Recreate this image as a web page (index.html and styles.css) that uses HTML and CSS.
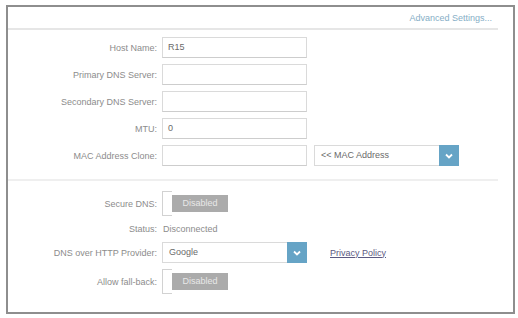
FILE: index.html
```html
<!DOCTYPE html>
<html lang="en">
<head>
  <meta charset="UTF-8" />
  <title>Internet Settings</title>
  <link rel="stylesheet" href="styles.css">
</head>
<body>

  <div class="panel">

    <!-- Header -->
    <div class="panel-head">
      <a class="adv-link" href="#">Advanced Settings...</a>
    </div>

    <!-- Basic fields -->
    <div class="form-grid top">
      <label class="lbl">Host Name:</label>
      <div class="field">R15</div>
      <span></span>

      <label class="lbl">Primary DNS Server:</label>
      <div class="field"></div>
      <span></span>

      <label class="lbl">Secondary DNS Server:</label>
      <div class="field"></div>
      <span></span>

      <label class="lbl">MTU:</label>
      <div class="field">0</div>
      <span></span>

      <label class="lbl">MAC Address Clone:</label>
      <div class="field"></div>
      <div class="select">
        <span class="select-text">&lt;&lt; MAC Address</span>
        <span class="select-btn">
          <svg width="8" height="6" viewBox="0 0 8 6"><path d="M1 1.5 L4 4.5 L7 1.5" fill="none" stroke="#fff" stroke-width="1.8"/></svg>
        </span>
      </div>
    </div>

    <div class="divider"></div>

    <!-- Secure DNS -->
    <div class="form-grid bottom">
      <label class="lbl">Secure DNS:</label>
      <div class="toggle">
        <span class="knob"></span>
        <span class="state">Disabled</span>
      </div>
      <span></span>

      <label class="lbl">Status:</label>
      <div class="status-val">Disconnected</div>
      <span></span>

      <label class="lbl">DNS over HTTP Provider:</label>
      <div class="select">
        <span class="select-text">Google</span>
        <span class="select-btn">
          <svg width="8" height="6" viewBox="0 0 8 6"><path d="M1 1.5 L4 4.5 L7 1.5" fill="none" stroke="#fff" stroke-width="1.8"/></svg>
        </span>
      </div>
      <a class="policy" href="#">Privacy Policy</a>

      <label class="lbl">Allow fall-back:</label>
      <div class="toggle">
        <span class="knob"></span>
        <span class="state">Disabled</span>
      </div>
      <span></span>
    </div>

  </div>

</body>
</html>
```

FILE: styles.css
```css
* {
  box-sizing: border-box;
  margin: 0;
  padding: 0;
  font-family: 'Liberation Sans', Arial, sans-serif;
}

body {
  background: #fff;
  color: #888;
  font-size: 9px;
}

.panel {
  width: 509px;
  height: 309px;
  margin: 5px 0 0 6px;
  border: 2px solid #8e8e8e;
  background: #fff;
}

/* Header */
.panel-head {
  height: 23px;
  margin-right: 15px;
  padding-right: 6px;
  border-bottom: 2px solid #e6e6e6;
  display: flex;
  align-items: center;
  justify-content: flex-end;
}

.adv-link {
  color: #86aec6;
  text-decoration: none;
  font-size: 9px;
}

/* Form grid */
.form-grid {
  display: grid;
  grid-template-columns: 149px 145px 152px;
  column-gap: 5px;
  align-items: center;
}

.form-grid.top {
  padding-top: 7px;
  padding-bottom: 13px;
  grid-auto-rows: 21px;
  row-gap: 6px;
}

.form-grid.bottom {
  padding-top: 10px;
  grid-template-rows: 25px 14px 21px 25px;
  row-gap: 6px;
}

.lbl {
  text-align: right;
  color: #8c8c8c;
  white-space: nowrap;
}

.field {
  height: 21px;
  border: 1px solid #dadada;
  border-bottom-color: #cdcdcd;
  padding-left: 5px;
  line-height: 19px;
  color: #6a6a6a;
  background: #fff;
}

.select {
  height: 21px;
  width: 145px;
  border: 1px solid #dadada;
  display: flex;
  align-items: stretch;
  background: #fff;
}

.form-grid.top .select {
  margin-left: 2px;
}

.select-text {
  flex: 1;
  padding-left: 6px;
  line-height: 19px;
  color: #6a6a6a;
}

.select-btn {
  width: 20px;
  margin: -1px -1px -1px 0;
  background: #66a4c6;
  display: flex;
  align-items: center;
  justify-content: center;
}

.divider {
  height: 2px;
  margin-right: 15px;
  background: #efefef;
}

/* Toggle */
.toggle {
  display: flex;
  align-items: center;
  height: 25px;
}

.knob {
  width: 10px;
  height: 25px;
  border: 1px solid #d2d2d2;
  border-right: none;
  background: #fff;
}

.state {
  width: 56px;
  height: 17px;
  background: #ababab;
  color: #e8e8e8;
  text-align: center;
  line-height: 17px;
}

.status-val {
  color: #8c8c8c;
  padding-left: 1px;
}

.policy {
  margin-left: 18px;
  color: #5c5a82;
  text-decoration: underline;
  white-space: nowrap;
}
```
